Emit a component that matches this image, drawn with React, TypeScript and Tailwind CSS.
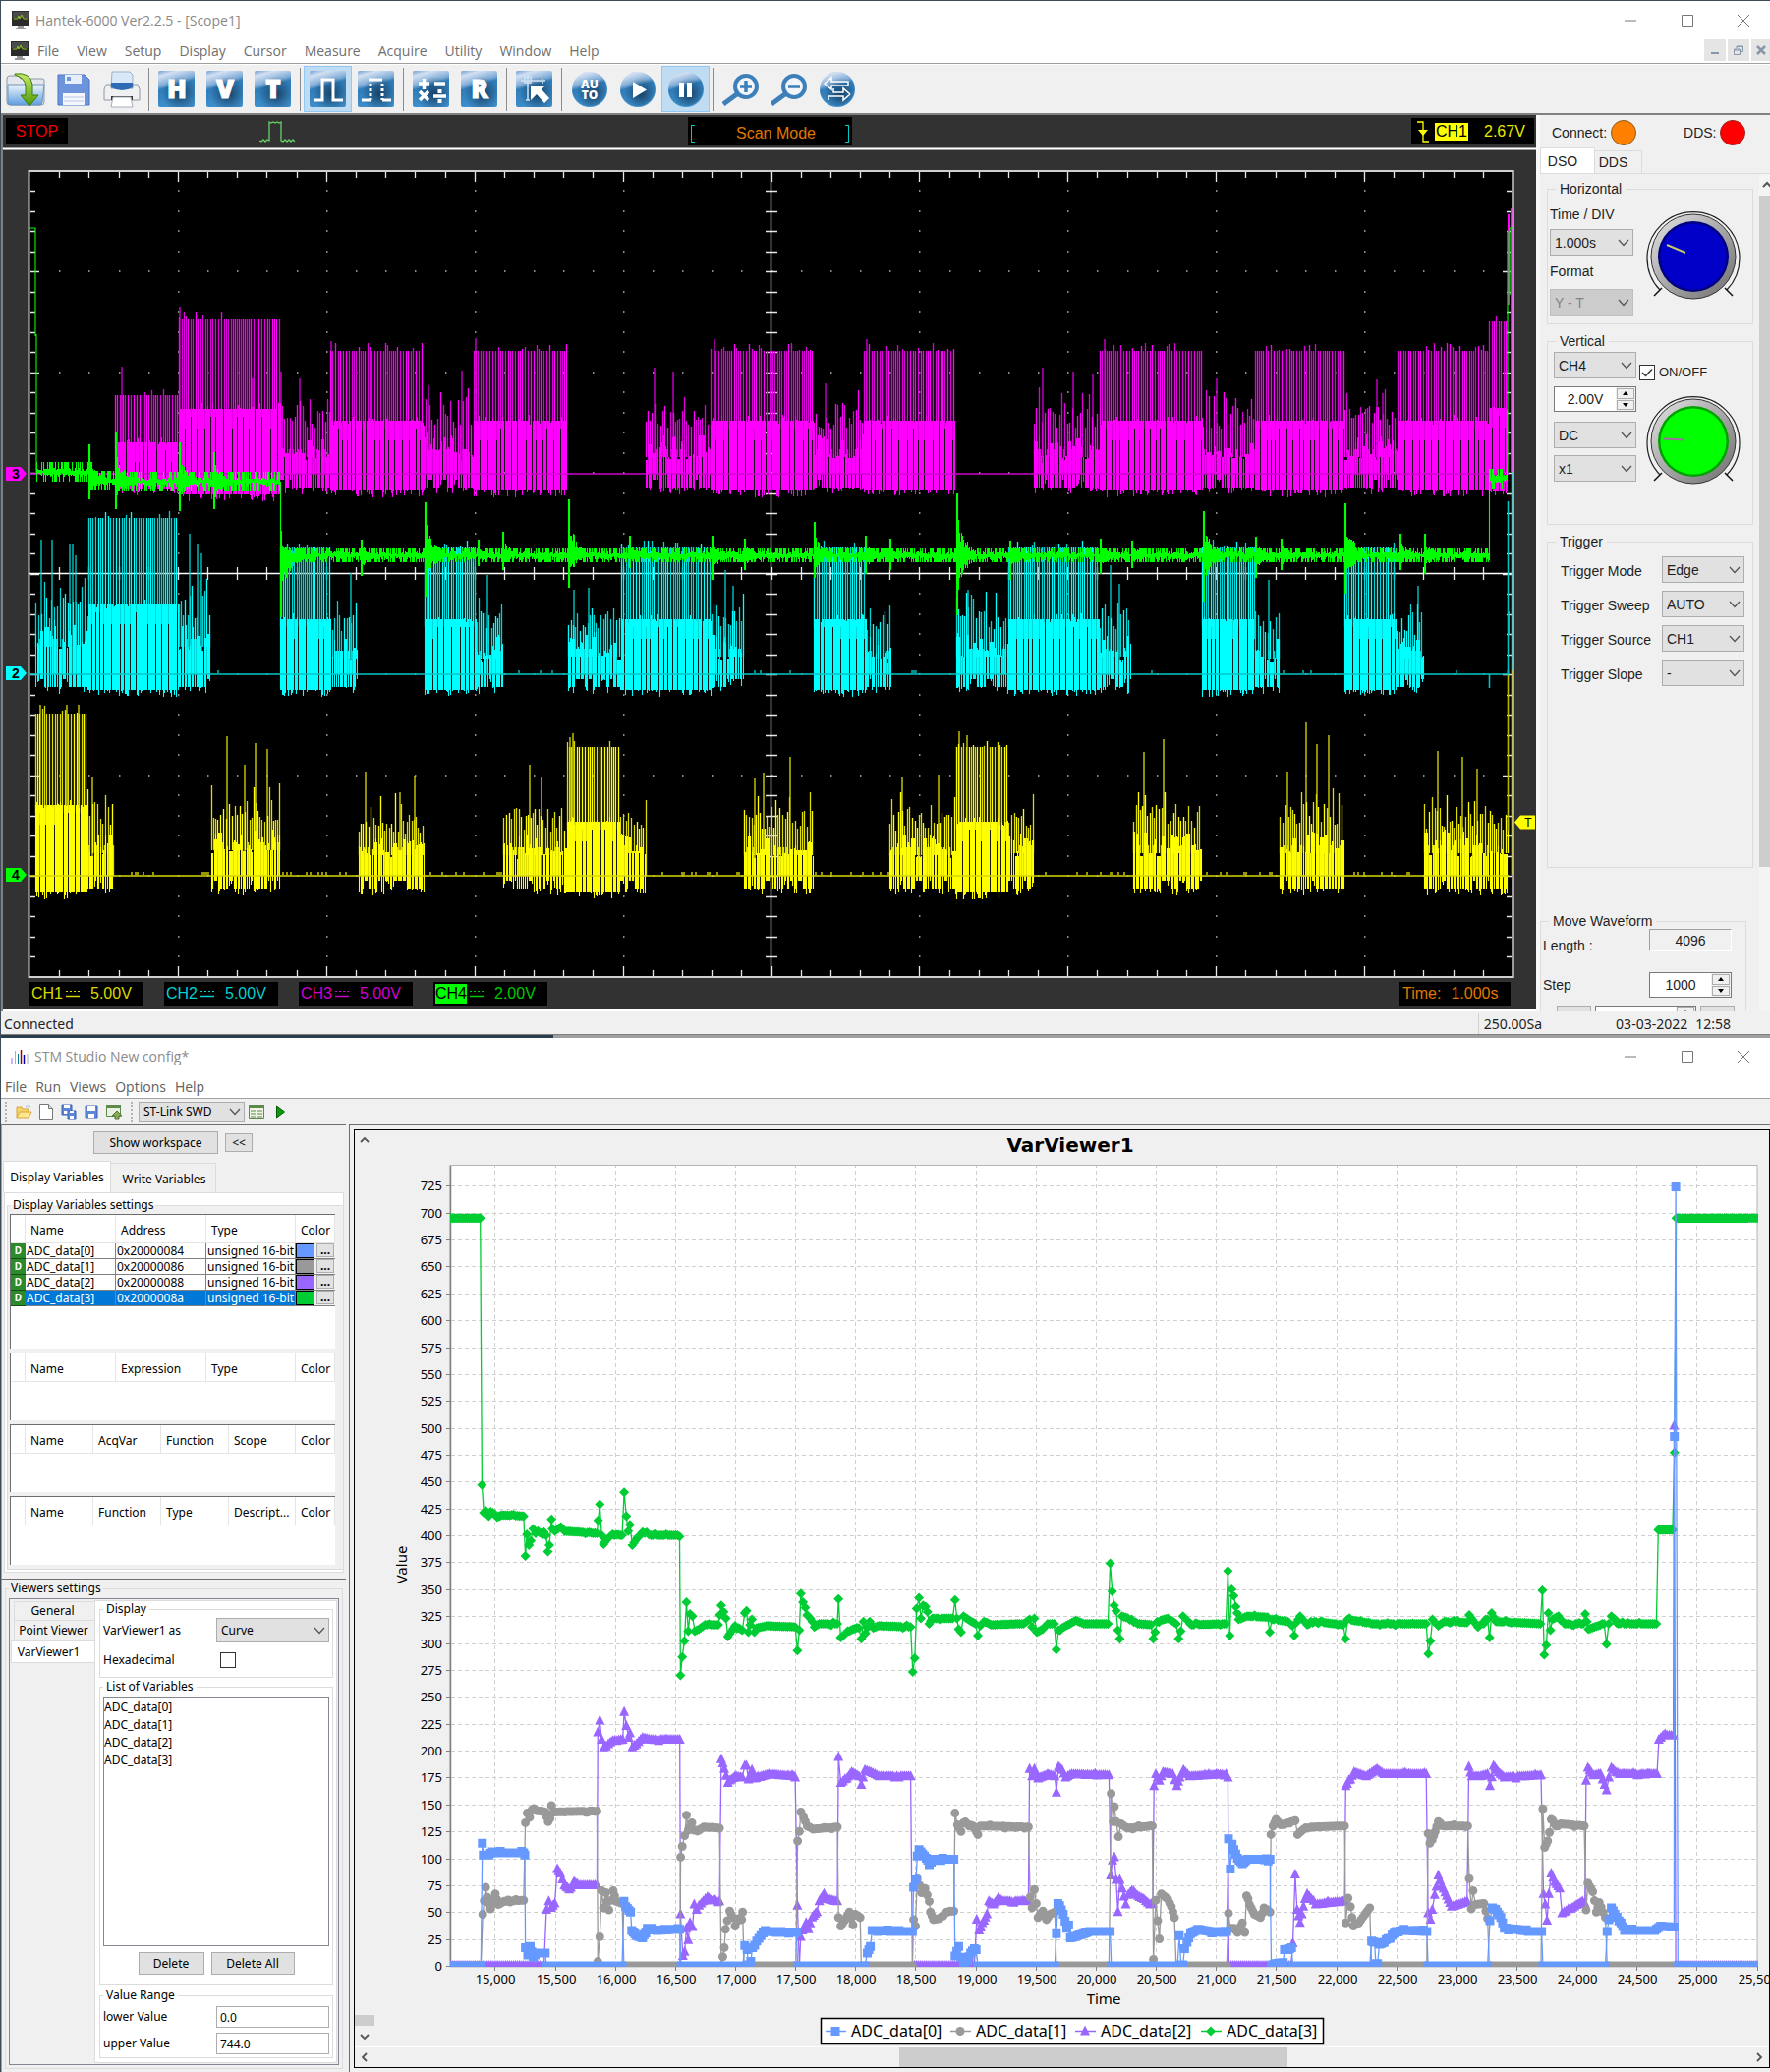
import React from "react";

/* ---------- deterministic noise ---------- */
function makeRandom(seed: number) {
  let s = seed;
  return () => {
    s = (s * 1664525 + 1013904223) % 4294967296;
    return s / 4294967296;
  };
}

/* ---------- oscilloscope traces ---------- */
type Burst = [x0: number, x1: number, top: number, mid: number, bottom: number, noisy?: boolean];

const MAGENTA: Burst[] = [
  [117, 182, 402, 450, 497],
  [182, 285, 325, 416, 503],
  [285, 336, 412, 457, 496, true],
  [336, 431, 357, 428, 499],
  [431, 482, 412, 457, 496, true],
  [482, 578, 357, 428, 499],
  [657, 723, 412, 457, 496, true],
  [723, 828, 357, 428, 499],
  [828, 879, 412, 457, 496, true],
  [879, 972, 357, 428, 499],
  [1052, 1119, 412, 457, 496, true],
  [1119, 1224, 357, 428, 499],
  [1224, 1277, 412, 457, 496, true],
  [1277, 1368, 357, 428, 499],
  [1368, 1422, 412, 457, 496, true],
  [1422, 1515, 357, 428, 499],
  [1515, 1534, 327, 415, 500],
];
const MAGENTA_SPIKES = [[124, 373], [183, 312], [257, 385], [286, 378], [305, 385], [337, 347], [436, 392], [470, 377], [484, 344], [666, 374], [685, 378], [727, 345], [840, 390], [882, 345], [1061, 374], [1092, 378], [1112, 380], [1124, 345], [1238, 385], [1401, 386], [1407, 400]];

const CYAN: Burst[] = [
  [36, 90, 605, 650, 699, true],
  [90, 182, 527, 615, 702],
  [182, 214, 605, 650, 699, true],
  [285, 338, 557, 630, 702],
  [338, 364, 622, 662, 699, true],
  [432, 485, 557, 630, 702],
  [485, 512, 622, 662, 699, true],
  [578, 632, 618, 660, 699, true],
  [632, 724, 557, 630, 702],
  [724, 757, 618, 660, 699, true],
  [828, 882, 557, 630, 702],
  [882, 907, 622, 662, 699, true],
  [973, 1026, 618, 660, 699, true],
  [1026, 1119, 557, 630, 702],
  [1119, 1151, 618, 660, 699, true],
  [1223, 1277, 557, 630, 702],
  [1277, 1303, 622, 662, 699, true],
  [1368, 1421, 557, 630, 702],
  [1421, 1449, 622, 662, 699, true],
];
const CYAN_SPIKES = [[42, 549], [53, 549], [71, 553], [74, 553], [77, 565], [193, 543], [201, 553], [205, 563], [357, 583], [496, 585], [584, 600], [599, 598], [738, 580], [746, 596], [985, 600], [1130, 575], [1139, 594], [1291, 590], [1443, 596]];

const YELLOW: Burst[] = [
  [36, 89, 726, 819, 908],
  [89, 116, 815, 860, 904, true],
  [215, 285, 813, 857, 904, true],
  [365, 432, 825, 862, 904, true],
  [512, 577, 822, 862, 904, true],
  [577, 631, 760, 836, 908],
  [631, 658, 820, 860, 904, true],
  [757, 828, 822, 862, 904, true],
  [905, 973, 822, 862, 904, true],
  [973, 1026, 760, 836, 908],
  [1026, 1052, 820, 860, 904, true],
  [1153, 1223, 818, 860, 904, true],
  [1302, 1368, 818, 860, 904, true],
  [1449, 1535, 820, 860, 904, true],
];
const YELLOW_SPIKES = [[41, 717], [68, 717], [80, 717], [94, 790], [231, 749], [249, 778], [260, 756], [272, 762], [372, 785], [407, 806], [422, 789], [539, 778], [551, 790], [580, 750], [583, 746], [768, 792], [777, 786], [804, 770], [918, 790], [955, 788], [976, 744], [984, 748], [1164, 765], [1184, 752], [1310, 785], [1329, 735], [1340, 757], [1352, 748], [1463, 764], [1488, 770], [1503, 782]];

function burstPaths(bursts: Burst[], spikes: number[][], base: number, seed: number) {
  const r = makeRandom(seed);
  let thin = "";
  let fill = "";
  for (const [x0, x1, top, mid, bottom, noisy] of bursts) {
    /* solid columns separated by one-pixel gaps */
    let x = x0;
    while (x < x1) {
      const w = Math.min(noisy ? 1 + Math.floor(r() * 4) : 3 + Math.floor(r() * 6), x1 - x);
      const columnTop = noisy ? mid + (r() - 0.55) * 26 : mid;
      const columnEnd = noisy && r() < 0.25 ? bottom - 8 : bottom;
      for (let k = 0; k < w; k++) {
        const up = columnTop + (r() < 0.2 ? (r() - 0.6) * 10 : 0);
        const down = columnEnd + (r() < 0.35 ? r() * 7 : 0);
        fill += `M${x + k + 0.5} ${up.toFixed(0)}V${down.toFixed(0)}`;
      }
      x += w;
      if (x < x1 && r() < 0.6) thin += `M${x + 0.5} ${mid}V${noisy ? base : mid + 20}`;
      x += 1;
    }
    for (let lx = x0 + 0.5; lx < x1; lx += r() < 0.45 ? 3 : 2) {
      const t = noisy ? top + (r() < 0.15 ? -18 * r() : r() * 24) : top + (r() < 0.25 ? -8 * r() : 0);
      const line = `M${lx} ${t.toFixed(0)}V${mid + 8}`;
      thin += line;
      if (r() < 0.4) fill += line;
    }
  }
  for (const [x, y] of spikes) thin += `M${x} ${y}V${base}`;
  return { thin, fill };
}

function idleBlips(bursts: Burst[], base: number, seed: number, density: number) {
  const r = makeRandom(seed);
  let d = "";
  for (let x = 40; x < 1532; x += 2) {
    const busy = bursts.some((b) => x >= b[0] && x <= b[1]);
    if (!busy && r() < density) d += `M${x} ${base - 3}V${base}`;
  }
  return d;
}

const GREEN_BURSTS: [number, number, number][] = [
  [90, 452, 508], [117, 440, 518], [182, 450, 520], [217, 460, 518],
  [285, 540, 628], [367, 549, 586], [432, 511, 607], [486, 549, 576], [511, 541, 580],
  [578, 508, 598], [640, 545, 578], [724, 545, 590], [757, 548, 580],
  [828, 531, 588], [880, 545, 584], [905, 548, 580], [973, 502, 626], [1027, 550, 590], [1119, 548, 584], [1151, 550, 578],
  [1224, 520, 612], [1277, 546, 588], [1303, 548, 580], [1368, 512, 604], [1424, 543, 580], [1449, 543, 584],
];

function greenTrace() {
  const r = makeRandom(77);
  let d = "M30 232H36V342M37 340V480";
  for (let x = 37; x < 1534; x += 1) {
    const c = x < 90 ? 480 : x < 117 ? 489 : x < 285 ? 490 : x < 1515 ? 565 : 487;
    const wide = x < 285 || x >= 1515 ? 10 : 7;
    let up = r() < 0.5 ? wide : 1 + r() * 3;
    let dn = r() < 0.5 ? wide : 1 + r() * 4;
    for (const [bx, top, bot] of GREEN_BURSTS) {
      const k = x - bx;
      if (k >= 0 && k < 20) {
        const f = Math.exp(-k / 9) * (0.4 + r() * 0.6);
        if (c - top > 0) up = Math.max(up, (c - top) * (k < 2 ? 1 : f * 0.75));
        if (bot - c > 0) dn = Math.max(dn, (bot - c) * (k < 2 ? 1 : f * 0.75));
      }
    }
    d += `M${x + 0.5} ${(c - up).toFixed(0)}V${(c + dn).toFixed(0)}`;
  }
  return d + "M285.5 490V600M1515.5 480V570M1534 480V235M1536 300V232H1539";
}

function Graticule() {
  const dots: string[] = [];
  let ticks = "";
  const px = 150.9;
  const py = 102.5;
  for (let i = 1; i < 50; i++) {
    const x = Math.round(30 + (i * px) / 5) + 0.5;
    const len = i % 5 === 0 ? 10 : 6;
    ticks += `M${x} 175v${len}M${x} 993v${-len}M${x} 577v13`;
    for (let j = 1; j < 8; j++) if (j !== 4) dots.push(`M${x - 0.5} ${Math.round(173.5 + j * py)}h1.5`);
  }
  for (let j = 1; j < 40; j++) {
    const y = Math.round(173.5 + (j * py) / 5) + 0.5;
    const len = j % 5 === 0 ? 9 : 5;
    ticks += `M31 ${y}h${len}M1538 ${y}h${-len}M779 ${y}h12`;
    for (let i = 1; i < 10; i++) if (i !== 5) dots.push(`M${Math.round(30 + i * px)} ${y - 0.5}h1.5`);
  }
  return (
    <g fill="none">
      <path d={dots.join("")} stroke="#b8b8b8" strokeWidth="1.5" />
      <path d={ticks} stroke="#e6e6e6" strokeWidth="1.3" />
      <path d="M30 583.5H1539M784.5 175V993" stroke="#fff" strokeWidth="1.4" />
    </g>
  );
}

function ChannelTag({ y, fill, label }: { y: number; fill: string; label: string }) {
  return (
    <g>
      <path d={`M6 ${y - 7}H21L27 ${y}L21 ${y + 7}H6Z`} fill={fill} />
      <text x="16" y={y + 5} fontSize="14" fontWeight="bold" textAnchor="middle" fontFamily="Liberation Sans, sans-serif">{label}</text>
    </g>
  );
}

function ScopeGraph() {
  const m = burstPaths(MAGENTA, MAGENTA_SPIKES, 482, 11);
  const c = burstPaths(CYAN, CYAN_SPIKES, 686, 23);
  const y = burstPaths(YELLOW, YELLOW_SPIKES, 891, 37);
  return (
    <svg viewBox="3 153 1560 844" className="block h-auto w-full" role="img" aria-label="Oscilloscope traces">
      <rect x="3" y="153" width="1560" height="844" fill="#323232" />
      <rect x="29.5" y="174" width="1510" height="820" fill="#000" stroke="#d0d0d0" strokeWidth="2" />
      <Graticule />
      <g fill="none">
        <path d={y.thin} stroke="#dcdc00" strokeWidth="1.3" />
        <path d={y.fill} stroke="#ff0" strokeWidth="1.1" />
        <path d={"M30 891H1535" + idleBlips(YELLOW, 890, 5, 0.18)} stroke="#d8d800" strokeWidth="1.4" />
        <path d="M1534.5 845V682M1538.5 890V682M1535 622V646" stroke="#b8b800" strokeWidth="1.6" />
        <path d={c.thin} stroke="#00d4d4" strokeWidth="1.3" />
        <path d={c.fill} stroke="#0ff" strokeWidth="1.1" />
        <path d={"M30 686H1535" + idleBlips(CYAN, 685, 9, 0.04)} stroke="#00c8c8" strokeWidth="1.4" />
        <path d="M1534.5 686V510M1538.5 682V420M1515.5 686V700" stroke="#00c0c0" strokeWidth="1.6" />
        <path d={m.thin} stroke="#dc00dc" strokeWidth="1.3" />
        <path d={m.fill} stroke="#f0f" strokeWidth="1.1" />
        <path d="M30 482H1535" stroke="#d000d0" strokeWidth="1.4" />
        <path d="M1538 212V480M1535 218V310" stroke="#f0f" strokeWidth="2" />
        <path d={greenTrace()} stroke="#0f0" strokeWidth="1.1" />
      </g>
      <path d="M1539.5 173V995" stroke="#c4c4c4" strokeWidth="2" />
      <ChannelTag y={482} fill="#f0f" label="3" />
      <ChannelTag y={685} fill="#0ff" label="2" />
      <ChannelTag y={890} fill="#0f0" label="4" />
      <path d="M1562 829.500H1547L1541 836.500L1547 843.500H1562Z" fill="#ff0" />
      <text x="1555" y="841" fontSize="12" textAnchor="middle" fontFamily="Liberation Sans, sans-serif">T</text>
    </svg>
  );
}

/* ---------- variable viewer data: [time, value] ---------- */
const ADC0 = [14632,0,14885,0,14897,114,14905,103,14950,103,14980,106,15030,105,15240,105,15250,103,15255,17,15275,10,15295,18,15320,8,15350,12,15420,12,15430,0,16060,0,16075,60,16090,55,16130,50,16140,33,16180,28,16230,26,16270,35,16350,33,16540,34,16550,0,17065,0,17080,19,17100,15,17110,1,17130,4,17145,17,17180,23,17250,33,17350,31,17510,31,17520,0,18080,0,18100,12,18125,18,18140,33,18200,33,18300,32,18475,32,18485,73,18505,80,18515,102,18530,108,18560,104,18590,100,18615,94,18650,99,18820,99,18830,9,18860,18,18880,8,18900,0,18935,5,18960,12,18990,16,19005,15,19020,0,19660,0,19673,30,19685,58,19700,56,19730,48,19760,35,19775,38,19790,26,19850,28,19950,32,20120,32,20130,0,20680,0,20695,28,20710,1,20725,1,20740,16,20760,22,20790,30,20850,34,20950,32,21090,32,21105,118,21120,90,21135,113,21150,108,21180,100,21220,95,21260,99,21450,99,21460,0,21500,2,21560,3,21570,15,21600,15,21630,17,21640,0,22280,0,22295,23,22320,22,22330,2,22345,2,22360,20,22400,22,22500,32,22550,33,22755,32,22765,0,23260,0,23280,42,23300,54,23340,50,23370,45,23400,35,23500,34,23600,32,23710,32,23720,0,24240,0,24255,32,24270,43,24290,54,24320,48,24370,40,24400,33,24650,33,24700,37,24800,36,24812,36,24814,492,24826,724,24844,0,25504,0];
const ADC1 = [14632,0,14885,0,14900,48,14925,73,14935,64,14965,53,15005,67,15030,57,15080,60,15240,61,15255,133,15270,142,15290,138,15310,145,15420,143,15445,134,15460,137,15473,149,15490,143,15850,144,15858,4,15874,27,15890,70,15905,54,15925,68,15950,52,15985,70,16010,60,16060,58,16075,0,16540,0,16547,101,16560,111,16580,121,16595,140,16610,126,16640,133,16660,126,16700,126,16740,129,16870,128,16885,0,16910,17,16920,34,16935,42,16955,51,16980,45,17000,37,17030,44,17055,43,17062,50,17075,0,17505,0,17520,116,17535,125,17547,143,17570,138,17600,130,17650,127,17850,129,17860,45,17880,37,17920,44,17950,50,17980,38,18000,48,18040,45,18050,0,18475,0,18485,43,18500,37,18515,81,18535,75,18550,68,18580,72,18615,60,18625,50,18650,43,18700,44,18760,50,18820,51,18830,142,18850,131,18880,125,18900,133,18980,130,19020,122,19040,130,19440,129,19455,64,19470,54,19490,71,19520,45,19560,51,19590,43,19620,48,19660,50,19673,0,20110,0,20128,160,20145,134,20155,148,20170,134,20190,120,20210,132,20260,128,20470,130,20480,6,20500,61,20515,42,20530,25,20545,67,20600,62,20630,55,20655,45,20670,0,21090,0,21105,49,21120,35,21150,35,21180,31,21220,40,21240,31,21255,65,21280,57,21320,48,21370,45,21400,54,21450,50,21458,122,21475,130,21500,136,21540,131,21660,135,21680,122,21730,127,21800,129,22070,130,22080,40,22100,63,22120,55,22145,37,22190,40,22240,48,22280,54,22295,0,22755,0,22765,123,22780,114,22800,117,22825,125,22850,134,22900,130,23095,130,23108,81,23125,53,23140,70,23160,57,23230,58,23260,44,23275,0,23705,0,23720,146,23735,110,23760,116,23775,124,23790,136,23830,130,23870,132,24065,130,24080,52,24095,77,24135,69,24165,50,24190,59,24220,50,24240,45,24255,0,25504,0];
const ADC2 = [14632,0,15410,0,15430,52,15450,60,15470,54,15500,58,15520,90,15545,86,15580,75,15620,71,15660,78,15700,75,15850,75,15858,217,15874,228,15890,210,15910,203,15980,209,16065,210,16077,236,16095,223,16115,212,16125,216,16145,203,16180,206,16230,212,16300,210,16540,210,16545,48,16565,9,16580,13,16595,35,16610,24,16625,40,16645,36,16660,57,16680,52,16700,56,16770,64,16800,61,16870,60,16885,192,16910,183,16940,170,17000,176,17060,175,17080,186,17095,186,17110,173,17140,182,17160,174,17280,178,17490,176,17500,175,17518,56,17535,0,17545,27,17560,33,17590,40,17610,34,17640,45,17680,50,17700,60,17740,67,17770,62,17850,60,17860,194,17880,170,17930,174,17970,180,18030,176,18050,168,18080,182,18130,180,18200,176,18460,176,18475,0,18990,0,19010,43,19030,33,19070,42,19095,48,19110,60,19150,57,19190,63,19240,60,19440,60,19450,183,19470,176,19490,183,19520,174,19600,178,19660,176,19673,161,19690,185,19720,182,19750,175,19800,178,20110,177,20125,84,20140,98,20155,101,20170,80,20185,50,20200,80,20220,72,20250,57,20270,66,20300,70,20350,65,20400,62,20450,57,20475,58,20485,167,20500,178,20530,172,20560,180,20640,178,20675,167,20700,175,20730,182,20780,176,21085,178,21100,175,21108,0,21625,0,21640,21,21660,85,21675,52,21700,40,21715,48,21740,62,21760,67,21830,57,21900,58,22070,60,22080,167,22120,173,22150,180,22250,176,22340,183,22400,178,22750,178,22765,49,22785,43,22800,52,22820,66,22850,84,22880,75,22920,65,22960,55,23020,57,23090,60,23105,185,23130,176,23200,176,23260,178,23280,167,23310,186,23350,180,23400,175,23705,177,23725,67,23740,57,23755,42,23770,67,23790,86,23820,78,23860,72,23880,49,23950,53,24050,60,24070,58,24080,172,24095,184,24140,177,24200,178,24250,163,24270,175,24290,184,24360,178,24670,178,24685,210,24720,214,24805,214,24812,502,24826,0,25504,0];
const ADC3 = [14632,695,14880,695,14894,447,14909,421,14925,423,14950,418,14965,422,15000,420,15020,417,15060,419,15240,418,15255,381,15268,401,15285,391,15300,395,15320,406,15340,402,15360,404,15400,401,15410,403,15427,400,15442,385,15455,391,15473,415,15480,406,15500,404,15550,408,15580,404,15850,402,15860,414,15874,429,15890,400,15906,392,15930,396,15980,401,16060,400,16077,440,16095,418,16110,404,16125,410,16145,391,16170,395,16230,403,16300,400,16520,400,16538,399,16545,270,16560,287,16578,302,16595,338,16610,311,16625,327,16645,325,16665,311,16700,313,16750,317,16860,317,16885,335,16905,329,16923,323,16940,306,17000,316,17060,312,17080,328,17095,330,17110,310,17125,317,17140,322,17160,310,17180,314,17260,316,17500,315,17518,293,17535,312,17547,346,17565,338,17585,333,17600,326,17625,323,17660,315,17700,318,17850,318,17860,341,17878,305,17920,309,17980,313,18030,314,18050,304,18068,320,18085,309,18120,320,18150,314,18200,316,18460,315,18478,273,18495,286,18510,332,18530,342,18545,323,18565,335,18585,334,18600,329,18615,318,18640,323,18810,323,18830,340,18845,323,18860,313,18880,310,18900,325,18950,321,19000,318,19020,307,19040,316,19070,320,19130,317,19400,318,19450,322,19470,315,19490,323,19510,310,19560,313,19600,318,19655,318,19672,294,19690,312,19720,314,19835,321,19900,318,20102,318,20120,374,20137,348,20153,335,20170,330,20185,312,20200,304,20218,325,20300,322,20350,318,20460,317,20478,304,20495,310,20512,320,20600,323,20670,318,20690,304,20708,311,20726,325,20800,317,21083,318,21100,367,21115,307,21131,350,21148,344,21165,334,21190,322,21260,325,21430,324,21448,310,21465,322,21600,320,21635,316,21652,307,21670,319,21700,325,21760,317,21820,320,22060,317,22078,304,22096,322,22300,318,22750,318,22768,290,22785,302,22802,322,22850,316,22900,320,23090,319,23108,326,23180,315,23260,322,23277,305,23294,328,23330,320,23700,318,23716,349,23732,289,23749,298,23766,328,23783,312,23800,322,23850,325,23900,318,24055,318,24073,327,24100,313,24230,318,24250,299,24268,318,24290,325,24350,318,24665,318,24680,405,24800,405,24815,477,24830,695,25504,695];

const tx = (t: number) => 503.4 + (t - 15000) * 0.1223;
const vy = (v: number) => 2000 - v * 1.0947;

/* Long spans are filled with samples every 16 ms; short ones are single steps. */
function samples(keys: number[], seed: number) {
  const r = makeRandom(seed);
  const out: [number, number][] = [];
  for (let i = 0; i < keys.length; i += 2) {
    const t = keys[i];
    const v = keys[i + 1];
    out.push([tx(t), vy(v)]);
    if (i + 2 < keys.length) {
      const dt = keys[i + 2] - t;
      const dv = keys[i + 3] - v;
      if (dt > 20) {
        const n = Math.round(dt / 16);
        for (let k = 1; k < n; k++) {
          const base = v + (dv * k) / n;
          const jitter = base > 5 && base < 600 && r() < 0.2 ? (r() - 0.5) * 3 : 0;
          out.push([tx(t + (dt * k) / n), vy(base + jitter)]);
        }
      }
    }
  }
  return out;
}

type Shape = "square" | "circle" | "triangle" | "diamond";
function marker(shape: Shape, x: number, y: number) {
  const X = x.toFixed(1);
  if (shape === "square") return `M${(x - 4.5).toFixed(1)} ${(y - 4.5).toFixed(1)}h9v9h-9z`;
  if (shape === "circle") return `M${(x - 4.5).toFixed(1)} ${y.toFixed(1)}a4.500 4.500 0 1 0 9 0a4.500 4.500 0 1 0 -9 0z`;
  if (shape === "triangle") return `M${X} ${(y - 6).toFixed(1)}l5 10h-10z`;
  return `M${X} ${(y - 5).toFixed(1)}l5 5l-5 5l-5 -5z`;
}

function Series({ keys, color, shape, seed }: { keys: number[]; color: string; shape: Shape; seed: number }) {
  const pts = samples(keys, seed);
  return (
    <g>
      <path d={"M" + pts.map(([x, y]) => `${x.toFixed(1)} ${y.toFixed(1)}`).join("L")} fill="none" stroke={color} strokeWidth="1.3" />
      <path d={pts.map(([x, y]) => marker(shape, x, y)).join("")} fill={color} />
    </g>
  );
}

const LEGEND: { label: string; color: string; shape: Shape; x: number }[] = [
  { label: "ADC_data[0]", color: "#6699ff", shape: "square", x: 850 },
  { label: "ADC_data[1]", color: "#999999", shape: "circle", x: 977 },
  { label: "ADC_data[2]", color: "#9966ff", shape: "triangle", x: 1104 },
  { label: "ADC_data[3]", color: "#00cc33", shape: "diamond", x: 1232 },
];

function VarChart() {
  const values = Array.from({ length: 30 }, (_, i) => i * 25);
  const times = Array.from({ length: 22 }, (_, i) => 15000 + i * 500);
  return (
    <svg viewBox="381 1150 1419 932" className="block h-auto min-w-0 flex-1" fontFamily="Noto Sans, sans-serif" role="img" aria-label="VarViewer1 chart">
      <defs>
        <clipPath id="plotArea"><rect x="458" y="1186" width="1331" height="815" /></clipPath>
      </defs>
      <text x="1089" y="1172" fontSize="20" fontWeight="bold" textAnchor="middle" fontFamily="DejaVu Sans, sans-serif">VarViewer1</text>
      <rect x="458" y="1185.500" width="1330" height="815" fill="#fff" stroke="#b4b4b4" />
      <g stroke="#cfcfcf" strokeDasharray="4 3" fill="none">
        {values.slice(1).map((v) => <path key={v} d={`M459 ${Math.round(vy(v)) + 0.5}H1788`} />)}
        {times.slice(0, 21).map((t) => <path key={t} d={`M${Math.round(tx(t)) + 0.5} 2000V1186`} />)}
      </g>
      <path d="M458.500 1186V2000.500H1788" fill="none" stroke="#808080" strokeWidth="1.500" />
      <g fontSize="13" textAnchor="end">
        {values.map((v) => (
          <g key={v}>
            <path d={`M454 ${Math.round(vy(v)) + 0.5}h4`} stroke="#808080" />
            <text x="450" y={Math.round(vy(v)) + 5}>{v}</text>
          </g>
        ))}
      </g>
      <g fontSize="13" textAnchor="middle">
        {times.map((t) => (
          <g key={t}>
            <path d={`M${Math.round(tx(t)) + 0.5} 2001v4`} stroke="#808080" />
            <text x={Math.round(tx(t)) + 1} y="2018">{t.toLocaleString("en-US")}</text>
          </g>
        ))}
      </g>
      <text x="1123" y="2039" fontSize="15" textAnchor="middle">Time</text>
      <text transform="translate(414 1592) rotate(-90)" fontSize="15" textAnchor="middle">Value</text>
      <g clipPath="url(#plotArea)">
        <Series keys={ADC3} color="#00cc33" shape="diamond" seed={3} />
        <Series keys={ADC2} color="#9966ff" shape="triangle" seed={4} />
        <Series keys={ADC1} color="#999999" shape="circle" seed={5} />
        <Series keys={ADC0} color="#6699ff" shape="square" seed={6} />
      </g>
      <rect x="835.500" y="2053.500" width="511" height="26" fill="#fff" stroke="#000" strokeWidth="1.500" />
      {LEGEND.map((l) => (
        <g key={l.label}>
          <path d={`M${l.x - 10} 2066.500h21`} stroke={l.color} strokeWidth="1.500" />
          <path d={marker(l.shape, l.x, 2066.5)} fill={l.color} />
          <text x={l.x + 16} y="2072" fontSize="16">{l.label}</text>
        </g>
      ))}
    </svg>
  );
}

/* ---------- small shared controls ---------- */
function Chevron({ className = "" }: { className?: string }) {
  return (
    <svg viewBox="0 0 12 8" className={"pointer-events-none absolute h-2 w-3 " + className} fill="none" stroke="#555" strokeWidth="1.3">
      <path d="M1 1l5 5.500L11 1" />
    </svg>
  );
}

function Drop({ value, label, className = "", disabled = false }: { value: string; label: string; className?: string; disabled?: boolean }) {
  return (
    <span className={"relative block " + className}>
      <select aria-label={label} disabled={disabled} defaultValue={value}
        className="block h-full w-full appearance-none border border-[#adadad] bg-[#e1e1e1] pr-5 pl-1 outline-none disabled:border-[#bfbfbf] disabled:bg-[#cccccc] disabled:text-[#838383] disabled:opacity-100">
        <option>{value}</option>
      </select>
      <Chevron className="top-1/2 right-1 -translate-y-1/2" />
    </span>
  );
}

function Spin({ value, label, className = "" }: { value: string; label: string; className?: string }) {
  return (
    <div className={"flex w-[84px] border border-[#7a7a7a] bg-white " + className}>
      <input aria-label={label} defaultValue={value} className="min-w-0 flex-1 bg-transparent text-center outline-none" />
      <div className="flex w-5 flex-col gap-px bg-[#f0f0f0] p-px">
        <button aria-label={label + " up"} className="flex flex-1 items-center justify-center border border-[#adadad] bg-[#f0f0f0]">
          <svg viewBox="0 0 6 4" className="h-1 w-1.5"><path d="M0 4L3 0L6 4Z" /></svg>
        </button>
        <button aria-label={label + " down"} className="flex flex-1 items-center justify-center border border-[#adadad] bg-[#f0f0f0]">
          <svg viewBox="0 0 6 4" className="h-1 w-1.5"><path d="M0 0L3 4L6 0Z" /></svg>
        </button>
      </div>
    </div>
  );
}

function WindowButtons() {
  return (
    <div className="flex text-[#777]">
      <button aria-label="Minimize" className="flex h-[38px] w-[58px] items-center justify-center">
        <svg viewBox="0 0 12 12" className="h-3 w-3" fill="none" stroke="currentColor"><path d="M0 6h12" /></svg>
      </button>
      <button aria-label="Maximize" className="flex h-[38px] w-[58px] items-center justify-center">
        <svg viewBox="0 0 12 12" className="h-3 w-3" fill="none" stroke="currentColor"><path d="M.5.5h11v11h-11z" /></svg>
      </button>
      <button aria-label="Close" className="flex h-[38px] w-[55px] items-center justify-center">
        <svg viewBox="0 0 12 12" className="h-3 w-3" fill="none" stroke="currentColor"><path d="M0 0l12 12M12 0L0 12" /></svg>
      </button>
    </div>
  );
}

/* ---------- Hantek toolbar icons ---------- */
function Gradients() {
  return (
    <svg className="absolute h-0 w-0" aria-hidden="true">
      <defs>
        <linearGradient id="tile" x1="0" y1="0" x2="0.300" y2="1">
          <stop offset="0" stopColor="#6f9fd0" /><stop offset=".15" stopColor="#d3e0f2" /><stop offset=".4" stopColor="#7eabd6" /><stop offset=".5" stopColor="#2f7cb8" /><stop offset="1" stopColor="#3f92cf" />
        </linearGradient>
        <radialGradient id="shade" cx=".6" cy=".65" r=".5">
          <stop offset="0" stopColor="#0c2b48" stopOpacity=".75" /><stop offset="1" stopColor="#0c2b48" stopOpacity="0" />
        </radialGradient>
        <linearGradient id="folder" x1="0" y1="0" x2="0" y2="1">
          <stop offset="0" stopColor="#f1f6fb" /><stop offset="1" stopColor="#5e9fe0" />
        </linearGradient>
        <linearGradient id="arrow" x1="0" y1="0" x2="0" y2="1">
          <stop offset="0" stopColor="#c7e96a" /><stop offset="1" stopColor="#4f9a06" />
        </linearGradient>
        <linearGradient id="ring" x1="0" y1="0" x2="1" y2="1">
          <stop offset="0" stopColor="#e4e4e4" /><stop offset="1" stopColor="#6c6c6c" />
        </linearGradient>
      </defs>
    </svg>
  );
}

function Tile({ round = false, children }: { round?: boolean; children: React.ReactNode }) {
  return (
    <svg viewBox="0 0 38 38" className="h-[38px] w-[38px]">
      {round ? <circle cx="19" cy="19" r="18" fill="url(#tile)" /> : <rect x="0" y="0" width="37" height="37" rx="2" fill="url(#tile)" />}
      {round ? <circle cx="19" cy="19" r="17" fill="url(#shade)" /> : <rect x="0" y="0" width="37" height="37" rx="2" fill="url(#shade)" />}
      {children}
    </svg>
  );
}

function Letter({ ch }: { ch: string }) {
  return <Tile><text x="19" y="28" fontSize="26" fontWeight="800" textAnchor="middle" fill="#fff" stroke="#fff" strokeWidth="1" fontFamily="Open Sans, sans-serif">{ch}</text></Tile>;
}

function ToolButton({ label, active = false, children }: { label: string; active?: boolean; children: React.ReactNode }) {
  return (
    <button aria-label={label} className={"flex h-[47px] w-[49px] items-center justify-center border " + (active ? "border-[#90c8f6] bg-[#c0dcf3]" : "border-transparent")}>
      {children}
    </button>
  );
}

const Sep = () => <div className="flex w-[7px] justify-center"><div className="h-11 w-px bg-[#8c8c8c]" /></div>;

function HantekToolbar() {
  return (
    <div className="flex h-[50px] items-center border-t border-white bg-[#f0f0f0]">
      <ToolButton label="Open">
        <svg viewBox="0 0 40 38" className="h-[38px] w-10">
          <path d="M1 8q0-3 3-3h8l3 3h22q2 0 2 2v22q0 3-3 3H4q-3 0-3-3z" fill="#e4e8ec" stroke="#8b98a6" />
          <path d="M2 14h37l-2 18q0 3-3 3H5q-2 0-3-2z" fill="url(#folder)" stroke="#6b93bf" />
          <path d="M9 3q16-2 18 11v11h6l-9 11-9-11h5V15q-1-8-11-11z" fill="url(#arrow)" stroke="#3f7d0a" />
        </svg>
      </ToolButton>
      <ToolButton label="Save">
        <svg viewBox="0 0 34 34" className="h-[34px] w-[34px]">
          <path d="M1 2h27l5 5v26H1z" fill="#6e95dc" stroke="#4a74c4" />
          <path d="M8 2h17v9H8z" fill="#e8effc" /><path d="M10 4h4v4h-4z" fill="#6e95dc" />
          <path d="M6 21h22v12H6z" fill="#f4f7fd" /><path d="M7 25h20M7 29h20" stroke="#b9c9e6" />
        </svg>
      </ToolButton>
      <ToolButton label="Print">
        <svg viewBox="0 0 38 38" className="h-[38px] w-[38px]">
          <path d="M9 1h18l3 3v13H8z" fill="#d9e8f8" stroke="#9db2c8" />
          <path d="M3 14h5v4h22v-4h5l2 5v11H1V19z" fill="#eef0f2" stroke="#8f98a3" />
          <path d="M8 12h22v5q-11 6-22 0z" fill="#2f6bb5" />
          <path d="M8 26h22v4H8z" fill="#333" /><path d="M10 27h18l2 10H8z" fill="#fff" stroke="#a6b0bc" />
        </svg>
      </ToolButton>
      <Sep />
      <ToolButton label="Horizontal"><Letter ch="H" /></ToolButton>
      <ToolButton label="Vertical"><Letter ch="V" /></ToolButton>
      <ToolButton label="Trigger"><Letter ch="T" /></ToolButton>
      <Sep />
      <ToolButton label="Pulse" active>
        <Tile><path d="M4 30h9V9h11v21h10" fill="none" stroke="#fff" strokeWidth="3" /></Tile>
      </ToolButton>
      <ToolButton label="Dotted pulse">
        <Tile><path d="M4 30h9M11 9h14M25 30h9" fill="none" stroke="#fff" strokeWidth="3" /><path d="M13 13v17M25 13v17" stroke="#fff" strokeWidth="3" strokeDasharray="3 2" /></Tile>
      </ToolButton>
      <Sep />
      <ToolButton label="Math">
        <Tile><path d="M6 13h11M11.500 8v11M22 13h11M7 21l9 9M16 21l-9 9M21 26h13" fill="none" stroke="#fff" strokeWidth="3.500" /><path d="M25.500 19h4v4h-4zM25.500 29h4v4h-4z" fill="#fff" /></Tile>
      </ToolButton>
      <ToolButton label="Reference"><Letter ch="R" /></ToolButton>
      <Sep />
      <ToolButton label="Cursor">
        <Tile><path d="M12 4v26M5 10h25M9 6h6v6H9zM27 8v5M10 30h4" fill="none" stroke="#cfe2f3" strokeWidth="1.500" /><path d="M15 15h15l-4 4 8 9-5 5-8-9-6 6z" fill="#fff" /></Tile>
      </ToolButton>
      <Sep />
      <ToolButton label="Auto">
        <Tile round>
          <text x="19" y="18" fontSize="12" fontWeight="800" textAnchor="middle" fill="#fff" fontFamily="Open Sans, sans-serif">
            AU<tspan x="19" y="29">TO</tspan>
          </text>
        </Tile>
      </ToolButton>
      <ToolButton label="Start"><Tile round><path d="M14 11l14 8.500-14 8.500z" fill="#fff" /></Tile></ToolButton>
      <ToolButton label="Pause" active><Tile round><path d="M12 12h5v15h-5zM20 12h5v15h-5z" fill="#fff" /></Tile></ToolButton>
      <Sep />
      <ToolButton label="Zoom in">
        <svg viewBox="0 0 38 38" className="h-[38px] w-[38px]" fill="none" stroke="#3d7fb8">
          <circle cx="24" cy="16" r="11" strokeWidth="4" fill="#f2f6fa" /><path d="M16 23L1 34" strokeWidth="5" /><path d="M18 16h12M24 10v12" strokeWidth="3.500" />
        </svg>
      </ToolButton>
      <ToolButton label="Zoom out">
        <svg viewBox="0 0 38 38" className="h-[38px] w-[38px]" fill="none" stroke="#3d7fb8">
          <circle cx="24" cy="16" r="11" strokeWidth="4" fill="#f2f6fa" /><path d="M16 23L1 34" strokeWidth="5" /><path d="M18 16h12" strokeWidth="3.500" />
        </svg>
      </ToolButton>
      <ToolButton label="Swap">
        <Tile round>
          <path d="M6 13l7-6v4h17v4H13v4zM32 24l-7-6v4H15v-4M32 24l-7 6v-4H10v4" fill="none" stroke="#fff" strokeWidth="1.500" />
        </Tile>
      </ToolButton>
    </div>
  );
}

function MonitorIcon() {
  return (
    <svg viewBox="0 0 18 20" className="h-5 w-[18px]">
      <path d="M0 0h18v15H0z" fill="#2b2b2b" /><path d="M1 1h16v6H1z" fill="#4b4b4b" />
      <path d="M2 8h4l1-3 1 3 2-4 2 4h4" fill="none" stroke="#8fc31f" />
      <path d="M6 15h6v2h2v2H4v-2h2z" fill="#9a9a9a" />
    </svg>
  );
}

/* ---------- Hantek right-hand panel ---------- */
function Knob({ fill, edge, pointer, stroke }: { fill: string; edge: string; pointer: string; stroke: string }) {
  return (
    <svg viewBox="0 0 100 100" className="h-[100px] w-[100px]">
      <path d="M16 84A47 47 0 1 1 84 84" fill="none" stroke="#222" strokeWidth="1.200" />
      <circle cx="50" cy="50" r="43" fill="url(#ring)" stroke="#333" strokeWidth="1" />
      <circle cx="50" cy="50" r="36" fill={edge} />
      <circle cx="50" cy="50" r="33.500" fill={fill} />
      <path d="M10 90l8-8M90 90l-8-8" stroke="#111" strokeWidth="1.500" />
      <path d={pointer} stroke={stroke} strokeWidth="2" />
    </svg>
  );
}

const GROUP = "ml-[7px] w-[210px] border border-[#dcdcdc]";
const LEGEND_TEXT = "ml-2 px-1 leading-4";

function ScopePanel() {
  const triggers = [["Trigger Mode", "Edge"], ["Trigger Sweep", "AUTO"], ["Trigger Source", "CH1"], ["Trigger Slope", "-"]];
  return (
    <aside className="flex h-[912px] w-[234px] shrink-0 flex-col overflow-hidden bg-[#f0f0f0] font-['Liberation_Sans',sans-serif] text-sm text-[#1e1e1e]">
      <div className="flex h-[34px] items-center pt-0.5 pl-3">
        <span>Connect:</span><span className="ml-1 h-[26px] w-[26px] rounded-full border border-[#8a5a20] bg-[#ff8000]" />
        <span className="ml-12">DDS:</span><span className="ml-[3px] h-[26px] w-[26px] rounded-full border border-[#a02020] bg-[#ff0000]" />
      </div>
      <div className="flex h-[26px] items-end border-b border-[#dcdcdc]" role="tablist">
        <button role="tab" aria-selected="true" className="h-[26px] w-14 border border-b-0 border-[#dcdcdc] bg-white pr-2.5">DSO</button>
        <button role="tab" aria-selected="false" className="h-[23px] w-12 border border-b-0 border-l-0 border-[#dcdcdc] pr-2.5">DDS</button>
      </div>
      <div className="flex min-h-0 flex-1">
        <div className="min-w-0 flex-1 overflow-hidden pt-[7px]">
          <fieldset className={GROUP + " h-[146px]"}>
            <legend className={LEGEND_TEXT}>Horizontal</legend>
            <div className="flex justify-between pr-2.5 pl-0.5">
              <div className="w-[85px] pt-2.5">
                <div className="leading-4">Time / DIV</div>
                <Drop label="Time / DIV" value="1.000s" className="mt-[7px] h-[27px]" />
                <div className="mt-2 leading-4">Format</div>
                <Drop label="Format" value="Y - T" disabled className="mt-2.5 h-[27px]" />
              </div>
              <div className="pt-[11px]"><Knob fill="#0000c8" edge="#000080" pointer="M23 38l19 8" stroke="#c8c864" /></div>
            </div>
          </fieldset>
          <fieldset className={GROUP + " mt-[9px] h-[195px]"}>
            <legend className={LEGEND_TEXT}>Vertical</legend>
            <div className="flex justify-between pr-2 pl-1.5">
              <div className="w-[84px] pt-[3px]">
                <Drop label="Channel" value="CH4" className="h-[27px]" />
                <Spin label="Volts per division" value="2.00V" className="mt-2 h-[26px]" />
                <Drop label="Coupling" value="DC" className="mt-2.5 h-[27px]" />
                <Drop label="Probe" value="x1" className="mt-[7px] h-[27px]" />
              </div>
              <div className="w-[107px] pt-4">
                <label className="flex h-4 items-center gap-1">
                  <span className="relative h-4 w-4">
                    <input type="checkbox" defaultChecked className="block h-4 w-4 appearance-none border border-[#333] bg-white" />
                    <svg viewBox="0 0 16 16" className="pointer-events-none absolute inset-0 h-4 w-4" fill="none" stroke="#333" strokeWidth="1.500"><path d="M3 8l3.500 3.500L13 4.500" /></svg>
                  </span>
                  <span className="text-[13px]">ON/OFF</span>
                </label>
                <div className="mt-3 pl-[5px]"><Knob fill="#00ff00" edge="#00a000" pointer="M20 47.500l21 1" stroke="#a06ea0" /></div>
              </div>
            </div>
          </fieldset>
          <fieldset className={GROUP + " mt-[9px] h-[340px]"}>
            <legend className={LEGEND_TEXT}>Trigger</legend>
            <div className="flex flex-col gap-2 pt-[7px] pr-2 pl-[13px]">
              {triggers.map(([name, value]) => (
                <div key={name} className="flex items-center justify-between">
                  <span className="pt-0.5">{name}</span>
                  <Drop label={name} value={value} className="h-[27px] w-[84px]" />
                </div>
              ))}
            </div>
          </fieldset>
          <fieldset className="mt-[46px] w-[210px] border border-[#dcdcdc]">
            <legend className={LEGEND_TEXT}>Move Waveform</legend>
            <div className="flex items-start justify-between pr-3.5 pl-0.5">
              <label htmlFor="wave-length" className="pt-[7px]">Length :</label>
              <input id="wave-length" readOnly defaultValue="4096" className="h-[23px] w-[84px] border border-r-white border-b-white border-[#a0a0a0] bg-[#f0f0f0] text-center outline-none" />
            </div>
            <div className="mt-[17px] flex items-center justify-between pr-3.5 pl-0.5">
              <span>Step</span>
              <Spin label="Step" value="1000" className="h-[26px]" />
            </div>
            <div className="mt-2 flex gap-1 pl-4">
              <button aria-label="Move left" className="h-6 w-[35px] border border-[#adadad] bg-[#e1e1e1]" />
              <Spin label="Position" value="" className="h-6 w-[103px]" />
              <button aria-label="Move right" className="h-6 w-[35px] border border-[#adadad] bg-[#e1e1e1]" />
            </div>
          </fieldset>
        </div>
        <div className="flex w-[11px] flex-col bg-[#f4f4f4]">
          <button aria-label="Scroll up" className="flex h-[22px] items-center justify-end">
            <svg viewBox="0 0 8 8" className="h-2 w-2" fill="none" stroke="#555" strokeWidth="2"><path d="M1 6l4-4 4 4" /></svg>
          </button>
          <div className="h-[683px] bg-[#cdcdcd]" />
        </div>
      </div>
    </aside>
  );
}

function ChannelBox({ name, volts, text, active = false }: { name: string; volts: string; text: string; active?: boolean }) {
  return (
    <div className={"flex h-6 w-[116px] items-center bg-black px-[2px] text-base leading-5 " + text}>
      <span className={active ? "bg-[#00ff00] text-black" : ""}>{name}</span>
      <svg viewBox="0 0 14 8" className="mx-[3px] h-2 w-3.5" stroke="currentColor"><path d="M0 1.500h14" strokeDasharray="2 2" /><path d="M0 6.500h14" strokeWidth="1.500" /></svg>
      <span className="ml-2">{volts}</span>
    </div>
  );
}

function HantekWindow() {
  const menu = ["File", "View", "Setup", "Display", "Cursor", "Measure", "Acquire", "Utility", "Window", "Help"];
  return (
    <section className="bg-white font-['Open_Sans',sans-serif] text-sm">
      <header className="flex h-[39px] items-center justify-between">
        <div className="flex items-center gap-1.5 pl-[11px] text-sm text-[#8a8a8a]"><MonitorIcon /><h1 className="font-normal">Hantek-6000 Ver2.2.5 - [Scope1]</h1></div>
        <WindowButtons />
      </header>
      <nav className="flex h-[25px] items-center justify-between border-b border-[#a0a0a0]">
        <div className="flex items-center pl-2.5 text-[#707070]">
          <MonitorIcon />
          <div className="flex gap-[18px] pl-[9px]">{menu.map((m) => <button key={m}>{m}</button>)}</div>
        </div>
        <div className="flex gap-0.5 self-stretch pb-0.5 text-[#8796a8]">
          <button aria-label="Minimize scope" className="flex w-[22px] items-center justify-center bg-[#e5e5e5]"><svg viewBox="0 0 10 10" className="h-2.5 w-2.5" stroke="currentColor" strokeWidth="2"><path d="M1 8h8" /></svg></button>
          <button aria-label="Restore scope" className="flex w-[22px] items-center justify-center bg-[#e5e5e5]"><svg viewBox="0 0 10 10" className="h-2.5 w-2.5" fill="none" stroke="currentColor"><path d="M.5 4h6v5.500h-6zM.500 5h6M3 3V1h6.500v5.500H7M3 1.500h6" /></svg></button>
          <button aria-label="Close scope" className="flex w-[19px] items-center justify-center bg-[#e5e5e5]"><svg viewBox="0 0 10 10" className="h-2.5 w-2.5" stroke="currentColor" strokeWidth="2.500"><path d="M1 1l8 8M9 1L1 9" /></svg></button>
        </div>
      </nav>
      <HantekToolbar />
      <div className="h-0.5 bg-[#808080]" />
      <div className="flex">
        <div className="min-w-0 flex-1 border-r-4 border-l-2 border-r-[#f8f8f8] border-l-[#808080] bg-[#323232] font-['Liberation_Sans',sans-serif]">
          <div className="grid h-[33px] grid-cols-[1fr_auto_1fr] items-center pr-0.5 pl-[3px] text-base">
            <div className="flex items-center">
              <span className="flex h-[27px] w-[63px] items-center justify-center bg-black text-[#f00000]">STOP</span>
              <svg viewBox="0 0 38 24" className="ml-[195px] h-6 w-[38px]" fill="none" stroke="#66d266" strokeWidth="1.300"><path d="M0 21l2 1 2-2 2 2 2-2 2 1V2l2 1 2-1 2 1 2-1 2 1 2-1v19l2 1 2-2 2 2 2-2 2 2 2-2 2 2" /></svg>
            </div>
            <div className="flex h-[29px] w-[167px] items-center justify-between bg-black px-[3px] pt-1 text-[#e07800]">
              <span className="h-[18px] w-1 border border-r-0 border-[#00c8c8]" />
              <span className="pl-3">Scan Mode</span>
              <span className="h-[18px] w-1 border border-l-0 border-[#00c8c8]" />
            </div>
            <div className="flex h-[27px] w-[125px] items-center justify-self-end bg-black pl-1.5 text-[#e8e800]">
              <svg viewBox="0 0 12 22" className="h-[22px] w-3" fill="none" stroke="#ff0" strokeWidth="1.300"><path d="M0 1h6v20h6" /><path d="M1 9h10l-5 6z" fill="#ff0" stroke="none" /></svg>
              <span className="ml-1.5 bg-[#ffff00] px-px leading-[18px] text-black">CH1</span>
              <span className="ml-4">2.67V</span>
            </div>
          </div>
          <div className="h-[3px] border-y border-[#a0a0a0] bg-white" />
          <ScopeGraph />
          <div className="flex h-[30px] items-start justify-between pt-0.5 pr-[26px] pl-[27px]">
            <div className="flex gap-[21px]">
              <ChannelBox name="CH1" volts="5.00V" text="text-[#d8d800]" />
              <ChannelBox name="CH2" volts="5.00V" text="text-[#00d0d0]" />
              <ChannelBox name="CH3" volts="5.00V" text="text-[#d000d0]" />
              <ChannelBox name="CH4" volts="2.00V" text="text-[#00c800]" active />
            </div>
            <div className="flex h-6 w-[113px] items-center gap-2.5 bg-black pl-[3px] text-base text-[#e07800]"><span>Time:</span><span>1.000s</span></div>
          </div>
          <div className="h-0.5 bg-white" />
        </div>
        <ScopePanel />
      </div>
      <footer className="flex h-6 items-center justify-between border-b border-[#808080] bg-[#f0f0f0] pt-0.5 pl-[3px] font-['Noto_Sans',sans-serif] text-sm text-[#1e1e1e]">
        <span>Connected</span>
        <div className="flex h-full items-center pr-10">
          <span className="mr-[75px] flex h-full items-center border-l border-[#d0d0d0] pl-[5px]">250.00Sa</span>
          <span className="mr-2">03-03-2022</span><span>12:58</span>
        </div>
      </footer>
    </section>
  );
}

/* ---------- STM Studio ---------- */
function MiniTable({ heads, widths, children, height }: { heads: string[]; widths: number[]; children?: React.ReactNode; height: string }) {
  return (
    <div className={"overflow-hidden border-t border-l border-[#6e6e6e] bg-white " + height}>
      <table className="w-full table-fixed border-separate border-spacing-0">
        <colgroup>{widths.map((w, i) => <col key={i} style={{ width: w }} />)}</colgroup>
        <thead>
          <tr className="h-[29px]">
            {heads.map((h, i) => (
              <th key={i} className="overflow-hidden border-r border-b border-[#e5e5e5] pt-1 pl-[5px] text-left font-normal whitespace-nowrap">{h}</th>
            ))}
          </tr>
        </thead>
        {children}
      </table>
    </div>
  );
}

const ROWS = [
  ["ADC_data[0]", "0x20000084", "bg-[#6699ff]"],
  ["ADC_data[1]", "0x20000086", "bg-[#999999]"],
  ["ADC_data[2]", "0x20000088", "bg-[#9966ff]"],
  ["ADC_data[3]", "0x2000008a", "bg-[#00cc33]"],
];

function DisplayVariables() {
  const three = [15, 92, 92, 91, 40];
  const four = [15, 69, 69, 69, 68, 40];
  const cell = "overflow-hidden border-r border-b border-[#808080] p-0 pl-px leading-[15px] whitespace-nowrap";
  return (
    <div className="mx-0.5 border border-[#dcdcdc] bg-white px-0.5 pt-1 pb-0.5">
      <fieldset className="border border-[#dcdcdc] bg-[#f0f0f0] pr-1 pb-1 pl-0.5">
        <legend className="px-[3px] leading-4">Display Variables settings</legend>
        <div className="mt-px flex flex-col gap-1 pr-1">
          <MiniTable heads={["", "Name", "Address", "Type", "Color"]} widths={three} height="h-[137px]">
            <tbody>
              {ROWS.map(([name, address, color], i) => (
                <tr key={name} className={i === 3 ? "h-4 bg-[#0078d7] text-white" : "h-4"}>
                  <td className="border-b border-[#145214] bg-[#2c8a2c] p-0 text-center text-[10px] leading-[15px] font-bold text-white">D</td>
                  <td className={cell}>{name}</td>
                  <td className={cell}>{address}</td>
                  <td className={cell}>{"unsigned 16-bit"}</td>
                  <td className="border-b border-[#808080] bg-[#f0f0f0] p-0">
                    <div className="flex h-[15px] gap-0.5">
                      <span className={"w-[19px] border border-black " + color} />
                      <button aria-label={"Pick color for " + name} className="h-[14px] w-[18px] border border-[#adadad] bg-[#e1e1e1] text-xs leading-[10px] font-bold text-black">...</button>
                    </div>
                  </td>
                </tr>
              ))}
            </tbody>
          </MiniTable>
          <MiniTable heads={["", "Name", "Expression", "Type", "Color"]} widths={three} height="h-[69px]" />
          <MiniTable heads={["", "Name", "AcqVar", "Function", "Scope", "Color"]} widths={four} height="h-[69px]" />
          <MiniTable heads={["", "Name", "Function", "Type", "Descript...", "Color"]} widths={four} height="h-[70px]" />
        </div>
      </fieldset>
    </div>
  );
}

function ViewersSettings() {
  const group = "border border-[#dcdcdc] px-[3px]";
  const legend = "px-[3px] leading-4";
  return (
    <fieldset className="mx-[3px] border border-[#dcdcdc] px-[3px] pb-[3px]">
      <legend className="px-0.5 leading-4">Viewers settings</legend>
      <div className="mt-0.5 flex border border-[#828790] p-px">
        <div className="flex w-[85px] flex-col items-stretch pt-px" role="tablist" aria-orientation="vertical">
          <button role="tab" aria-selected="false" className="ml-[3px] h-5 border border-r-0 border-[#dcdcdc] pr-1 leading-[18px]">General</button>
          <button role="tab" aria-selected="false" className="ml-[3px] h-5 border-b border-l border-[#dcdcdc] pr-0.5 leading-[18px]">Point Viewer</button>
          <button role="tab" aria-selected="true" className="-mr-px h-[23px] border border-r-0 border-[#dcdcdc] bg-white pr-2.5 leading-5">VarViewer1</button>
        </div>
        <div className="min-w-0 flex-1 border border-[#dcdcdc] bg-white pr-[3px] pb-1 pl-1">
          <fieldset className={group + " h-[78px]"}>
            <legend className={legend}>Display</legend>
            <div className="mt-px flex h-[25px] items-center justify-between">
              <span>VarViewer1 as</span><Drop label="VarViewer1 as" value="Curve" className="h-[25px] w-[115px]" />
            </div>
            <div className="mt-2.5 flex h-4 items-center justify-between">
              <label htmlFor="hex">Hexadecimal</label>
              <div className="w-[111px]"><input id="hex" type="checkbox" className="block h-4 w-4 appearance-none border border-[#333] bg-white" /></div>
            </div>
          </fieldset>
          <fieldset className={group + " mt-px h-[311px]"}>
            <legend className={legend}>List of Variables</legend>
            <ul className="mt-0.5 h-[254px] border border-[#828790] pt-px">
              {ROWS.map(([name]) => <li key={name} className="leading-[18px]">{name}</li>)}
            </ul>
            <div className="mt-1.5 flex justify-center gap-[7px]">
              <button className="h-[23px] w-[67px] border border-[#adadad] bg-[#e1e1e1]">Delete</button>
              <button className="h-[23px] w-[85px] border border-[#adadad] bg-[#e1e1e1]">Delete All</button>
            </div>
          </fieldset>
          <fieldset className={group + " mt-[3px] pb-[3px]"}>
            <legend className={legend}>Value Range</legend>
            <div className="mt-[3px] flex flex-col gap-[5px]">
              <label className="flex items-center justify-between">lower Value<input defaultValue="0.0" className="h-[22px] w-[115px] border border-[#abadb3] bg-white px-[3px] outline-none" /></label>
              <label className="flex items-center justify-between">upper Value<input defaultValue="744.0" className="h-[22px] w-[115px] border border-[#abadb3] bg-white px-[3px] outline-none" /></label>
            </div>
          </fieldset>
        </div>
      </div>
    </fieldset>
  );
}

const Grip = () => <div className="h-5 w-0 border-l-2 border-dotted border-[#b4b4b4]" />;

function StmToolbar() {
  return (
    <div className="flex h-[26px] items-center bg-[#f0f0f0] pl-1 text-xs">
      <Grip />
      <button aria-label="Open config" className="ml-2 h-4 w-[18px]">
        <svg viewBox="0 0 18 16"><path d="M2 14V3h5l1 2h6v3" fill="#f6d36b" stroke="#d9a63a" /><path d="M2 14l3-6h12l-3 6z" fill="#ffe58c" stroke="#d9a63a" /><path d="M11 3q3-3 5 0" fill="none" stroke="#8bb7dd" /></svg>
      </button>
      <button aria-label="New config" className="ml-1.5 h-4 w-4">
        <svg viewBox="0 0 16 16"><path d="M1.500.5h9l4 4v11h-13z" fill="#fff" stroke="#777" /><path d="M10.500.5v4h4" fill="#ddd" stroke="#777" /></svg>
      </button>
      <button aria-label="Save all" className="ml-[7px] h-4 w-4">
        <svg viewBox="0 0 16 16"><path d="M1 1h10v10H1z" fill="#5c86d8" stroke="#3c62b0" /><path d="M3 1h6v3H3zM3 7h6v3H3z" fill="#fff" /><path d="M7 7h8v8H7z" fill="#5c86d8" stroke="#3c62b0" /><path d="M9 7h4v2H9zM9 12h4v3H9z" fill="#fff" /></svg>
      </button>
      <button aria-label="Save config" className="ml-[7px] h-4 w-4">
        <svg viewBox="0 0 16 16"><path d="M2 2h12v12H2z" fill="#5c86d8" stroke="#3c62b0" /><path d="M4 2h8v5H4zM5 10h6v4H5z" fill="#fff" /></svg>
      </button>
      <button aria-label="Export" className="ml-1.5 h-4 w-[18px]">
        <svg viewBox="0 0 18 16"><path d="M1.500 1.500h14v11h-14z" fill="#e9efe2" stroke="#5d8a4a" /><path d="M1 1h15v3H1z" fill="#5d8a4a" /><path d="M12 7l5 5h-3v3h-4v-3H7z" fill="#8aa95b" stroke="#55752f" /></svg>
      </button>
      <span className="ml-2 flex"><Grip /></span>
      <Drop label="Probe" value="ST-Link SWD" className="ml-1.5 h-5 w-[108px]" />
      <button aria-label="Acquisition list" className="ml-1 h-4 w-4">
        <svg viewBox="0 0 16 16"><path d="M.5 1.500h15v13H.5z" fill="#eef4e6" stroke="#5d8a4a" /><path d="M0 1h16v3H0z" fill="#5d8a4a" /><path d="M2 7h5M2 10h5M2 13h5M9 7h5M9 10h5M9 13h5" stroke="#5d8a4a" /></svg>
      </button>
      <button aria-label="Run" className="ml-3 h-3.5 w-2.5">
        <svg viewBox="0 0 10 14"><path d="M.5 1l8 6-8 6z" fill="#0a9a0a" stroke="#045c04" /></svg>
      </button>
    </div>
  );
}

function Arrow({ d }: { d: string }) {
  return <svg viewBox="0 0 12 12" className="h-3 w-3" fill="none" stroke="#555" strokeWidth="1.800"><path d={d} /></svg>;
}

function StmWindow() {
  return (
    <section className="bg-[#f0f0f0] font-['Noto_Sans',sans-serif] text-xs text-black">
      <header className="flex h-[38px] items-center justify-between bg-white">
        <div className="flex items-center gap-1.5 pl-2.5 font-['Open_Sans',sans-serif] text-sm text-[#8a8a8a]">
          <svg viewBox="0 0 18 16" className="h-4 w-[18px]" fill="none">
            <path d="M1 15V9" stroke="#9966ff" /><path d="M4.500 15V2" stroke="#ff9955" /><path d="M7.500 15V5" stroke="#00808c" /><path d="M10.500 15V1" stroke="#a00000" strokeWidth="1.500" /><path d="M13.500 15V6" stroke="#0000c0" strokeWidth="1.500" /><path d="M17 15V5" stroke="#aaa" />
          </svg>
          <h1 className="font-normal">STM Studio New config*</h1>
        </div>
        <WindowButtons />
      </header>
      <nav className="flex h-6 items-center gap-[9px] border-b border-[#a0a0a0] bg-white pl-1 font-['Open_Sans',sans-serif] text-sm text-[#606060]">
        {["File", "Run", "Views", "Options", "Help"].map((m) => <button key={m}>{m}</button>)}
      </nav>
      <StmToolbar />
      <div className="flex items-stretch">
        <aside className="mr-[3px] w-[351px] shrink-0">
          <div className="h-[462px] border-t border-l border-t-[#6e6e6e] border-l-[#a0a0a0]">
            <div className="flex items-center gap-[7px] pt-1.5 pl-[93px]">
              <button className="h-[23px] w-[127px] border border-[#adadad] bg-[#e1e1e1]">Show workspace</button>
              <button className="h-[19px] w-7 border border-[#adadad] bg-[#e1e1e1] leading-4">&lt;&lt;</button>
            </div>
            <div className="mt-[7px] flex items-end pl-px" role="tablist">
              <button role="tab" aria-selected="true" className="h-8 w-[110px] border border-b-0 border-[#dcdcdc] bg-white">Display Variables</button>
              <button role="tab" aria-selected="false" className="h-[30px] w-[107px] border border-b-0 border-l-0 border-[#dcdcdc] pt-0.5 pl-0.5">Write Variables</button>
            </div>
            <DisplayVariables />
          </div>
          <div className="border-t border-l border-t-[#6e6e6e] border-l-[#a0a0a0] pt-px pb-[3px]">
            <ViewersSettings />
          </div>
        </aside>
        <main className="flex min-w-0 flex-1 flex-col border-t border-l border-[#6e6e6e] pt-1 pb-1 pl-1">
          <div className="flex flex-1 flex-col border border-black">
            <div className="flex">
              <div className="flex w-5 flex-col">
                <button aria-label="Scroll up" className="flex h-5 items-center justify-center"><Arrow d="M2 8l4-4 4 4" /></button>
                <div className="flex-1" />
                <div className="h-[11px] bg-[#cdcdcd]" />
                <button aria-label="Scroll down" className="flex h-[21px] items-center justify-center"><Arrow d="M2 4l4 4 4-4" /></button>
              </div>
              <VarChart />
            </div>
            <div className="flex h-[21px] border-t border-white">
              <button aria-label="Scroll left" className="flex w-5 items-center justify-center"><Arrow d="M8 2L4 6l4 4" /></button>
              <div className="grow-[534]" />
              <div className="grow-[395] bg-[#cdcdcd]" />
              <div className="grow-[470]" />
              <button aria-label="Scroll right" className="flex w-5 items-center justify-center"><Arrow d="M4 2l4 4-4 4" /></button>
            </div>
          </div>
        </main>
      </div>
    </section>
  );
}

export default function App() {
  return (
    <div className="w-full overflow-hidden border-t border-l border-[#3c4c5a]">
      <Gradients />
      <HantekWindow />
      <div className="flex h-[3px]"><div className="w-[562px] bg-[#2a3d4d]" /><div className="flex-1 bg-[#a0a0a0]" /></div>
      <StmWindow />
    </div>
  );
}
